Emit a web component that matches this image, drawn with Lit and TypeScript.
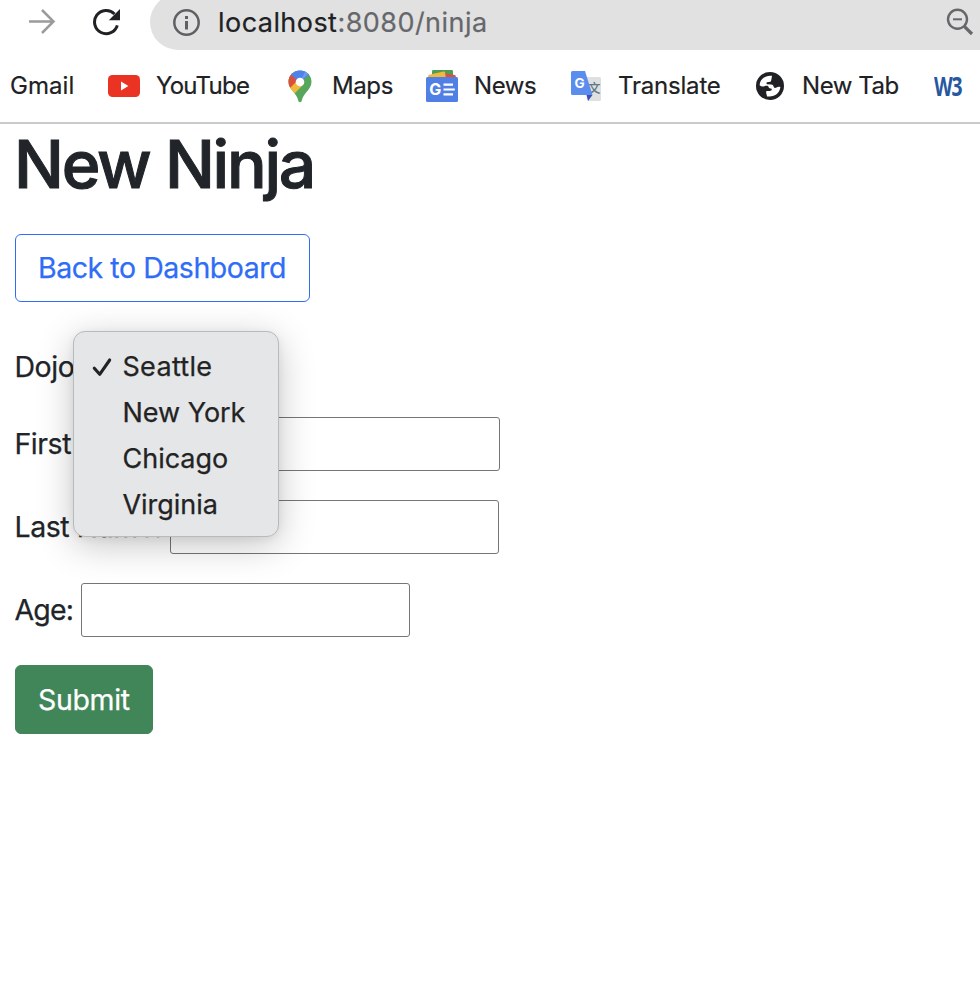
import { LitElement, html, css, svg } from "lit";
import { customElement, property, state } from "lit/decorators.js";

const icons = {
  youtube: svg`<svg width="32" height="22" viewBox="0 0 32 22"><rect width="32" height="22" rx="4.5" fill="#ea3323"/><path d="M13 6.6 20.4 11 13 15.4z" fill="#fff"/></svg>`,
  maps: svg`<svg width="24" height="33" viewBox="0 0 24 33">
    <defs><clipPath id="pin"><path d="M12 .5C5.500.5.5 5.400.5 11.700c0 4.300 2.300 7 5 10.300 2.200 2.700 4 5.300 4.600 8.300.4 1.300.8 2 1.900 2s1.500-.7 1.900-2c.6-3 2.400-5.600 4.600-8.300 2.700-3.300 5-6 5-10.300C23.500 5.400 18.500.5 12 .5z"/></clipPath></defs>
    <g clip-path="url(#pin)"><path fill="#56a65c" d="M0 0h24v33H0z"/><path fill="#f3b93d" d="M0 10 9 8l6 7-10 10-5-2z"/><path fill="#d9503f" d="M3 2 11 9 2 18l-5-5z"/><path fill="#4f83ea" d="M2 4 9 10 12 12 22 4 18-2H4z"/><path fill="#6c9bef" d="m12 12 9.500-9.500L18 0z"/></g>
    <circle cx="12" cy="12" r="4.300" fill="#fff"/></svg>`,
  news: svg`<svg width="32" height="32" viewBox="0 0 32 32">
    <path d="M6 1.200Q6 0 7.200 0h18.600Q27 0 27 1.200V10H6z" fill="#4c9f55"/><path d="M18 3l10.600 2q1.400.3 1.200 1.500L29 10H16z" fill="#d9503f"/><path d="M2.200 6.300Q2 5 3.200 4.700L17.500 1.600q1.300-.2 1.600 1L20 10H3z" fill="#f1b83e"/>
    <rect y="7" width="32" height="25" rx="1.500" fill="#5080e6"/>
    <text x="3.200" y="25.300" font-size="16" font-weight="700" class="glyph" fill="#fff">G</text>
    <path d="M17.500 14.700h9.500M17.500 19.500h11.300M17.500 24.300h9.500" stroke="#fff" stroke-width="2.200"/></svg>`,
  translate: svg`<svg width="30" height="30" viewBox="0 0 30 30">
    <path d="M13 6h15.500q1.500 0 1.500 1.500v21q0 1.500-1.500 1.500H17z" fill="#dfe0e0"/>
    <text x="17" y="22" font-size="12.500" class="cjk" fill="#607985">文</text>
    <path d="M15.500 24H21.500L17 30z" fill="#3a4fb5"/><path d="M1.500 0H14l7.500 24h-20Q0 24 0 22.500v-21Q0 0 1.500 0z" fill="#5b8def"/>
    <text x="3.500" y="16.800" font-size="13.500" font-weight="700" class="glyph" fill="#fff">G</text></svg>`,
  globe: svg`<svg width="28" height="28" viewBox="0 0 28 28"><circle cx="14" cy="14" r="14" fill="#202124"/>
    <path d="M16 3.700C9 3 3.800 7.500 3.600 13.300q1.400 1.200 3 1.200c2.400-.2 3-1.200 5-.7 1.200.5.8 2 2 2.400l2 .6c.5 1.600-.5 2.200-2 2.200h-2.400c-1.200 0-1.200 1.200-.9 2.400l.8 3c7 1.200 12.500-2.800 13.300-9.300-1.200-.7-2.700-.5-3.900.4-1.200.8-2.300.6-2.700-.5-.4-1.500-1-2.300-2.500-2.500l-4-.2c-1-.2-1.200-1.500-.3-2l3.400-.6c.8-.3.6-1.300 1-2.200z" fill="#fff"/></svg>`,
  w3: svg`<svg width="30" height="40" viewBox="0 0 30 40"><text x="0" y="30" font-size="27" textLength="27.500" lengthAdjust="spacingAndGlyphs" class="w3" fill="#27589f">W3</text></svg>`,
};

interface Bookmark { cls: string; label: string; icon?: unknown }

const bookmarks: Bookmark[] = [
  { cls: "gmail", label: "Gmail" },
  { cls: "youtube", label: "YouTube", icon: icons.youtube },
  { cls: "maps", label: "Maps", icon: icons.maps },
  { cls: "news", label: "News", icon: icons.news },
  { cls: "translate", label: "Translate", icon: icons.translate },
  { cls: "newtab", label: "New Tab", icon: icons.globe },
  { cls: "w3s", label: "", icon: icons.w3 },
];

@customElement("browser-bar")
export class BrowserBar extends LitElement {
  static styles = css`
    :host { display: block; border-bottom: 2px solid #cacaca; color: #202124; }
    svg { display: block; flex: none; }
    .toolbar { display: flex; height: 50px; align-items: flex-start; overflow: hidden; }
    .forward { margin: 8px 0 0 28px; }
    .reload { margin: 8px 0 0 37px; }
    .omnibox { flex: 1; height: 56px; margin: -6px 0 0 29px; box-sizing: border-box; padding: 0 6px 0 22px;
      border-radius: 28px 0 0 28px; background: #e1e1e1; display: flex; align-items: center; }
    .url { flex: 1; padding-left: 18px; font-size: 27px; letter-spacing: .45px; white-space: pre; -webkit-text-stroke: .2px; }
    .path { color: #66676a; }
    .bookmarks { display: grid; height: 72px; align-items: center;
      grid-template-columns: 108px 180px 138px 145px 185px 178px 46px; font-size: 24px; white-space: nowrap; }
    .item { display: grid; align-items: center; }
    .label { padding-bottom: 2px; -webkit-text-stroke: .2px; }
    .gmail { padding-left: 10px; letter-spacing: .05px; }
    .youtube { grid-template-columns: 48px auto; letter-spacing: -.75px; }
    .maps { grid-template-columns: 44px auto; letter-spacing: -.4px; }
    .news { grid-template-columns: 48px auto; letter-spacing: -.4px; }
    .translate { grid-template-columns: 47px auto; letter-spacing: -.2px; }
    .newtab { grid-template-columns: 46px auto; letter-spacing: -.45px; }
    .glyph { font-family: Inter, sans-serif; letter-spacing: 0; }
    .cjk { font-family: "Noto Sans CJK SC", sans-serif; font-weight: 500; }
    .w3 { font-family: "Open Sans", sans-serif; font-weight: 700; letter-spacing: -1.5px; }
  `;
  render() {
    return html`
      <div class="toolbar">
        <svg class="forward" width="28" height="28" viewBox="0 0 28 28" fill="none" stroke="#9b9b9b" stroke-width="2.500"><path d="M1 13.500H25.500M14 2 25.500 13.500 14 25"/></svg>
        <svg class="reload" width="28" height="28" viewBox="0 0 28 28"><path d="M24.300 17.300A11.600 11.600 0 1 1 21.500 6" fill="none" stroke="#202124" stroke-width="3"/><path d="M27 1v11.200H15.800z" fill="#202124"/></svg>
        <div class="omnibox">
          <svg width="28" height="28" viewBox="0 0 28 28"><circle cx="14.500" cy="14.500" r="12.200" fill="none" stroke="#5f6063" stroke-width="2.500"/><path d="M13 8h3v3h-3zM13 13h3v8.500h-3z" fill="#5f6063"/></svg>
          <div class="url"><span>localhost</span><span class="path">:8080/ninja</span></div>
          <svg width="28" height="28" viewBox="0 0 28 28" fill="none" stroke="#66676a"><circle cx="11.500" cy="11.300" r="9.500" stroke-width="2.400"/><path d="M7 11.300h9" stroke-width="2"/><path d="m18.300 18.300 7.700 7.700" stroke-width="3.200"/></svg>
        </div>
      </div>
      <div class="bookmarks">
        ${bookmarks.map(b => html`<div class="item ${b.cls}">${b.icon ?? ""}${b.label ? html`<span class="label">${b.label}</span>` : ""}</div>`)}
      </div>`;
  }
}

@customElement("option-menu")
export class OptionMenu extends LitElement {
  @property({ type: Array }) options: string[] = [];
  @property() selected = "";
  static styles = css`
    :host { display: block; box-sizing: border-box; width: 206px; height: 206px; padding: 11px 0 9px; border: 1px solid #b9babb;
      border-radius: 12px; background: #e5e6e8; color: #232323; font-size: 27px; letter-spacing: -.03px;
      box-shadow: 0 8px 36px rgba(0, 0, 0, .23), 0 2px 8px rgba(0, 0, 0, .06); }
    .option { display: grid; grid-template-columns: 30.5px auto; align-items: center; height: 46px; padding-left: 18px; }
    .label { grid-column: 2; white-space: nowrap; -webkit-text-stroke: .25px; }
    .checked .label { letter-spacing: .3px; }
    svg { display: block; grid-column: 1; margin-top: 2px; }
  `;
  render() {
    return this.options.map(o => html`
      <div class="option ${o === this.selected ? "checked" : ""}">
        ${o === this.selected ? html`<svg width="20" height="20" viewBox="0 0 20 20"><path d="M2.300 11.200 7.700 17.300 17.700 3" fill="none" stroke="#232323" stroke-width="3.100" stroke-linecap="round" stroke-linejoin="round"/></svg>` : ""}
        <span class="label">${o}</span>
      </div>`);
  }
}

@customElement("app-root")
export class AppRoot extends LitElement {
  @state() private dojo = "Seattle";
  static styles = css`
    :host { display: block; min-height: 986px; background: #fff; color: #212529; font-family: Inter, "Liberation Sans", sans-serif; overflow: hidden; }
    main { display: flex; flex-direction: column; align-items: flex-start; padding: 1px 15px 0; font-size: 28.5px; letter-spacing: -.45px; -webkit-text-stroke: .25px; }
    h1 { margin: -1px 0 30px -1px; font-size: 66px; line-height: 80px; font-weight: 500; letter-spacing: -2.25px; -webkit-text-stroke: 1px; }
    .button { box-sizing: border-box; display: flex; align-items: center; justify-content: flex-start; height: 68px; padding: 0 22px;
      border: 1px solid #2f6df6; border-radius: 6px; background: #fff; color: #2f6df6; font: inherit; letter-spacing: inherit; text-decoration: none; white-space: nowrap; }
    .back { width: 295px; margin-bottom: 37px; padding-bottom: 2px; }
    .submit { width: 138px; height: 69px; background: #418659; border-color: #418659; color: #fff; margin-top: -1px; letter-spacing: -.35px; }
    form { display: flex; flex-direction: column; align-items: flex-start; gap: 29px; }
    .row { display: flex; align-items: center; height: 54px; }
    .dojo { position: relative; margin-bottom: -5px; }
    .dojo label { padding-bottom: 0; }
    option-menu { position: absolute; left: 58px; top: -8px; z-index: 1; }
    label { width: 155px; padding-bottom: 2px; margin-left: -.5px; margin-right: .5px; white-space: nowrap; }
    .age label { width: 66px; letter-spacing: -.8px; }
    input { box-sizing: border-box; width: 329px; height: 54px; margin: 0; border: 1px solid #767676; border-radius: 3px; background: #fff; outline: none; }
    .first input { width: 330px; }
  `;
  render() {
    return html`
      <browser-bar></browser-bar>
      <main>
        <h1>New Ninja</h1>
        <a class="button back">Back to Dashboard</a>
        <form>
          <div class="row dojo"><label>Dojo</label>
            <option-menu .options=${["Seattle", "New York", "Chicago", "Virginia"]} .selected=${this.dojo}></option-menu>
          </div>
          <div class="row first"><label>First Name:</label><input></div>
          <div class="row"><label>Last Name:</label><input></div>
          <div class="row age"><label>Age:</label><input></div>
          <button class="button submit" type="button">Submit</button>
        </form>
      </main>`;
  }
}
